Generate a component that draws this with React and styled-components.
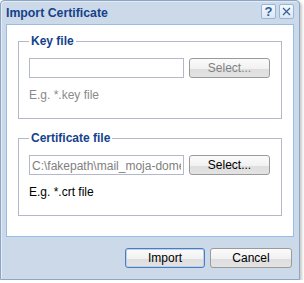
import styled, { createGlobalStyle } from "styled-components";

const GlobalStyle = createGlobalStyle`
  body {
    margin: 0;
    background: #ffffff;
    font-family: "Liberation Sans", Arial, sans-serif;
    font-size: 12px;
  }
`;

const Window = styled.div`
  width: 300px;
  height: 280px;
  box-sizing: border-box;
  border: 1px solid #8ea6c6;
  border-radius: 4px 4px 0 0;
  background: #ccd9e8;
  box-shadow: inset 1px 1px 0 #e3ebf5, 2px 2px 3px rgba(0, 0, 0, 0.22);
  display: flex;
  flex-direction: column;
`;

const Header = styled.div`
  height: 23px;
  display: flex;
  align-items: center;
  padding: 0 5px 0 5px;
`;

const Title = styled.div`
  flex: 1;
  color: #15428b;
  font-weight: bold;
  font-size: 12.3px;
  padding-top: 1px;
`;

const Tools = styled.div`
  display: flex;
  gap: 3px;
  margin-top: -2px;
`;

const Tool = styled.div`
  width: 13px;
  height: 13px;
  border: 1px solid #98b5dc;
  border-radius: 2px;
  background: linear-gradient(#f5f8fc, #dce6f3);
  display: flex;
  align-items: center;
  justify-content: center;
  color: #2e5e9e;
  font-weight: bold;
  font-size: 13px;
  line-height: 1;
`;

const Body = styled.div`
  margin: 0 5px;
  height: 213px;
  box-sizing: border-box;
  border: 1px solid #99bbe8;
  background: #ffffff;
  padding: 9px 11px 0 11px;
`;

const Group = styled.fieldset`
  margin: 0 0 12px 0;
  padding: 10px 10px 16px 10px;
  border: 1px solid #b5b8c8;
  min-width: 0;

  legend {
    color: #15428b;
    font-weight: bold;
    font-size: 12px;
    padding: 0 2px;
    margin-left: 0;
    line-height: 14px;
  }
`;

const Row = styled.div`
  display: flex;
  gap: 5px;
  align-items: flex-start;
`;

const Field = styled.input`
  width: 155px;
  height: 20px;
  box-sizing: border-box;
  margin: 0;
  border: 1px solid #b5b8c8;
  background: #ffffff;
  color: #808080;
  padding: 1px 2px 0 2px;
  font-family: "Liberation Sans", Arial, sans-serif;
  font-size: 12px;
  outline: none;
`;

const Button = styled.div`
  width: ${({ w }) => w || 81}px;
  height: 20px;
  box-sizing: border-box;
  border: 1px solid ${({ focused }) => (focused ? "#4a7cc4" : "#9a9a9a")};
  border-radius: 3px;
  background: linear-gradient(#fbfbfb 0%, #f1f1f1 55%, #dedede 56%, #e3e3e3 100%);
  box-shadow: ${({ focused }) => (focused ? "inset 0 0 0 1px #bcd0ea" : "none")};
  color: ${({ dim }) => (dim ? "#808080" : "#000000")};
  display: flex;
  align-items: center;
  justify-content: center;
  font-size: 12px;
`;

const Hint = styled.div`
  margin-top: 10px;
  color: ${({ dim }) => (dim ? "#8a8a8a" : "#000000")};
  font-size: 12px;
  line-height: 14px;
`;

const Footer = styled.div`
  display: flex;
  justify-content: flex-end;
  gap: 5px;
  padding: 11px 7px 0 0;
`;

function FileGroup({ label, value, hint, empty }) {
  return (
    <Group>
      <legend>{label}</legend>
      <Row>
        <Field type="text" readOnly value={value} />
        <Button dim={empty}>Select...</Button>
      </Row>
      <Hint dim={empty}>{hint}</Hint>
    </Group>
  );
}

export default function App() {
  return (
    <>
      <GlobalStyle />
      <Window>
        <Header>
          <Title>Import Certificate</Title>
          <Tools>
            <Tool>?</Tool>
            <Tool>
              <svg width="9" height="9" viewBox="0 0 9 9">
                <path d="M1 1 L8 8 M8 1 L1 8" stroke="#2e5e9e" strokeWidth="1.2" />
              </svg>
            </Tool>
          </Tools>
        </Header>
        <Body>
          <FileGroup label="Key file" value="" hint="E.g. *.key file" empty />
          <FileGroup
            label="Certificate file"
            value="C:\fakepath\mail_moja-domena.crt"
            hint="E.g. *.crt file"
          />
        </Body>
        <Footer>
          <Button w={80} focused>Import</Button>
          <Button w={82}>Cancel</Button>
        </Footer>
      </Window>
    </>
  );
}
